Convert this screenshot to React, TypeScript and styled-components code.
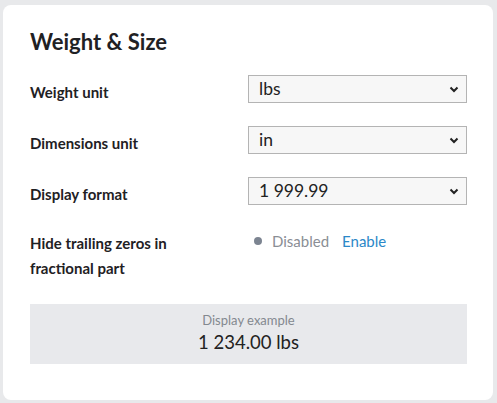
import React from 'react';
import styled, { createGlobalStyle } from 'styled-components';

const GlobalStyle = createGlobalStyle`
  html, body {
    margin: 0;
    padding: 0;
    background: #e8e9eb;
    font-family: Lato, 'Open Sans', sans-serif;
    color: #1f2124;
  }
`;

const Page = styled.div`
  padding: 5px 4px 3px 3px;
`;

const Card = styled.div`
  background: #ffffff;
  border-radius: 8px;
  padding: 22px 26px 39px 27px;
  box-sizing: border-box;
  height: 395px;
`;

const Title = styled.h2`
  margin: 0 0 18px;
  font-size: 22px;
  line-height: 30px;
  font-weight: 700;
`;

const Row = styled.div<{ $top?: boolean }>`
  display: grid;
  grid-template-columns: 218px 1fr;
  align-items: ${(p) => (p.$top ? 'start' : 'center')};
  padding-top: ${(p) => (p.$top ? '3px' : '0')};
  margin-bottom: ${(p) => (p.$top ? '23px' : '23px')};
`;

const Label = styled.div<{ $multi?: boolean }>`
  font-size: 15px;
  font-weight: 700;
  line-height: ${(p) => (p.$multi ? '25px' : '22px')};
  padding-top: ${(p) => (p.$multi ? '0' : '6px')};
`;

const SelectBox = styled.div`
  position: relative;
  height: 28px;
  box-sizing: border-box;
  border: 1px solid #b4b4b4;
  background: #f7f7f7;
  padding: 0 28px 0 10px;
  font-size: 17.5px;
  line-height: 26px;
  color: #222;
`;

const Chevron = styled.svg`
  position: absolute;
  right: 7px;
  top: 10px;
`;

const Status = styled.div`
  display: flex;
  align-items: center;
  font-size: 15px;
  line-height: 20px;
  padding: 0 0 0 6px;
`;

const Dot = styled.span`
  width: 8px;
  height: 8px;
  border-radius: 50%;
  background: #7c8491;
  margin-right: 10px;
`;

const Muted = styled.span`
  color: #8a8e95;
`;

const Link = styled.a`
  color: #2b88c8;
  text-decoration: none;
  margin-left: 13px;
  cursor: pointer;
`;

const Example = styled.div`
  background: #e8e9ec;
  padding: 7px 0 9px;
  text-align: center;
`;

const ExampleCaption = styled.div`
  font-size: 13px;
  line-height: 19px;
  color: #83888f;
`;

const ExampleValue = styled.div`
  font-size: 18.5px;
  line-height: 25px;
  color: #222;
`;

function Select({ value }: { value: string }) {
  return (
    <SelectBox>
      {value}
      <Chevron width="10" height="7" viewBox="0 0 10 7">
        <path d="M1.5 1.5 L5 5 L8.5 1.5" fill="none" stroke="#222" strokeWidth="2" />
      </Chevron>
    </SelectBox>
  );
}

export default function App() {
  return (
    <Page>
      <GlobalStyle />
      <Card>
        <Title>Weight &amp; Size</Title>
        <Row>
          <Label>Weight unit</Label>
          <Select value="lbs" />
        </Row>
        <Row>
          <Label>Dimensions unit</Label>
          <Select value="in" />
        </Row>
        <Row>
          <Label>Display format</Label>
          <Select value="1 999.99" />
        </Row>
        <Row $top>
          <Label $multi>
            Hide trailing zeros in
            <br />
            fractional part
          </Label>
          <Status>
            <Dot />
            <Muted>Disabled</Muted>
            <Link>Enable</Link>
          </Status>
        </Row>
        <Example>
          <ExampleCaption>Display example</ExampleCaption>
          <ExampleValue>1 234.00 lbs</ExampleValue>
        </Example>
      </Card>
    </Page>
  );
}
